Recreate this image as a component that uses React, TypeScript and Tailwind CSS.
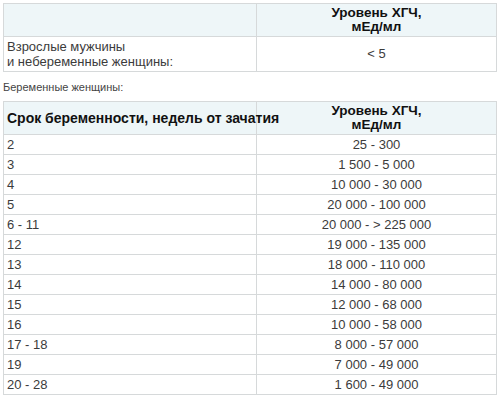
import React from "react";

const rows: [string, string][] = [
  ["2", "25 - 300"],
  ["3", "1 500 - 5 000"],
  ["4", "10 000 - 30 000"],
  ["5", "20 000 - 100 000"],
  ["6 - 11", "20 000 - > 225 000"],
  ["12", "19 000 - 135 000"],
  ["13", "18 000 - 110 000"],
  ["14", "14 000 - 80 000"],
  ["15", "12 000 - 68 000"],
  ["16", "10 000 - 58 000"],
  ["17 - 18", "8 000 - 57 000"],
  ["19", "7 000 - 49 000"],
  ["20 - 28", "1 600 - 49 000"],
];

export default function App() {
  return (
    <div
      className="w-[500px] h-[398px] bg-white px-[3px] pt-[3px] text-[#3b3b3b]"
      style={{ fontFamily: '"Liberation Sans", Arial, sans-serif' }}
    >
      <table className="w-[494px] border-collapse table-fixed text-[13px]">
        <colgroup>
          <col className="w-[253px]" />
          <col />
        </colgroup>
        <tbody>
          <tr className="h-[33px] bg-[#eef6f8]">
            <td className="border border-[#d6d9da]"></td>
            <td className="border border-[#d6d9da] text-center font-bold text-[#111] text-[13.5px] leading-[14px] align-middle">
              Уровень ХГЧ,
              <br />
              мЕд/мл
            </td>
          </tr>
          <tr className="h-[35px]">
            <td className="border border-[#d6d9da] pl-[3px] leading-[15px] align-middle">
              Взрослые мужчины
              <br />
              и небеременные женщины:
            </td>
            <td className="border border-[#d6d9da] text-center align-middle">&lt; 5</td>
          </tr>
        </tbody>
      </table>
      <div className="text-[11px] leading-[13px] mt-[9px] mb-[7px] text-[#444]">Беременные женщины:</div>
      <table className="w-[494px] border-collapse table-fixed text-[13px]">
        <colgroup>
          <col className="w-[253px]" />
          <col />
        </colgroup>
        <tbody>
          <tr className="h-[33px] bg-[#eef6f8]">
            <td className="border border-[#d6d9da] pl-[3px] font-bold text-[#111] text-[14px] align-middle whitespace-nowrap">
              Срок беременности, недель от зачатия
            </td>
            <td className="border border-[#d6d9da] text-center font-bold text-[#111] text-[13.5px] leading-[14px] align-middle">
              Уровень ХГЧ,
              <br />
              мЕд/мл
            </td>
          </tr>
          {rows.map(([a, b]) => (
            <tr key={a} className="h-[20px]">
              <td className="border border-[#d6d9da] pl-[3px] leading-[16px] align-middle">{a}</td>
              <td className="border border-[#d6d9da] text-center leading-[16px] align-middle">{b}</td>
            </tr>
          ))}
        </tbody>
      </table>
    </div>
  );
}
